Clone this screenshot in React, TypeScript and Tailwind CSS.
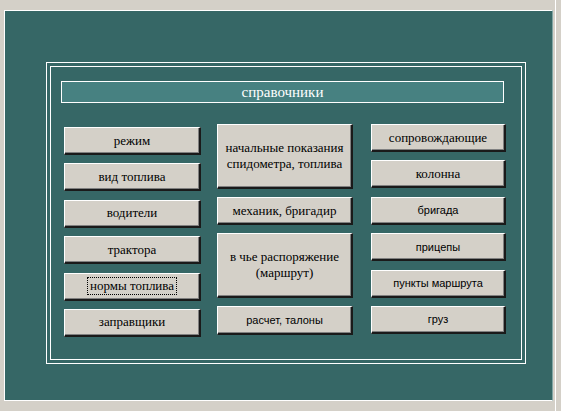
const serif = "font-['Liberation_Serif','Times_New_Roman',serif]";
const sansFont = "font-['Liberation_Sans',Arial,sans-serif]";

function Btn({
  children,
  h = 'h-[28px]',
  sans = false,
  focus = false,
}: {
  children: React.ReactNode;
  h?: string;
  sans?: boolean;
  focus?: boolean;
}) {
  return (
    <div
      className={`${h} flex items-center justify-center bg-[#d4d0c8] border-t border-l border-t-white border-l-white border-r-2 border-b-2 border-r-[#1a1a1a] border-b-[#1a1a1a] shadow-[inset_-1px_-1px_0_#808080] text-black text-center leading-[16px] ${
        sans ? `${sansFont} text-[11px]` : `${serif} text-[13px]`
      }`}
    >
      {focus ? (
        <span className="border border-dotted border-black px-[2px] leading-[16px]">{children}</span>
      ) : (
        <span>{children}</span>
      )}
    </div>
  );
}

export default function App() {
  return (
    <div className="w-[561px] h-[411px] bg-[#d4d0c8] pt-[10px] pl-[4px] overflow-hidden flex">
      <div className="w-[549px] h-[391px] bg-[#366766] border border-white border-r-[#7fa3a2] pt-[51px] pl-[41px]">
        <div className="w-[480px] h-[302px] border border-white p-[3px]">
          <div className="h-full border border-white pt-[14px] pl-[10px]">
            <div
              className={`w-[443px] h-[22px] bg-[#478181] border border-white flex items-center justify-center text-white text-[15px] ${serif}`}
            >
              справочники
            </div>
            <div className="flex mt-[21px] pl-[3px]">
              <div className="w-[137px] flex flex-col gap-[8.4px] mt-[3px]">
                <Btn>режим</Btn>
                <Btn>вид топлива</Btn>
                <Btn>водители</Btn>
                <Btn>трактора</Btn>
                <Btn focus>нормы топлива</Btn>
                <Btn>заправщики</Btn>
              </div>
              <div className="w-[136px] ml-[16px] flex flex-col gap-[8px]">
                <Btn h="h-[65px]">
                  начальные показания
                  <br />
                  спидометра, топлива
                </Btn>
                <Btn>механик, бригадир</Btn>
                <Btn h="h-[65px]">
                  в чье распоряжение
                  <br />
                  (маршрут)
                </Btn>
                <Btn h="h-[29px]" sans>
                  расчет, талоны
                </Btn>
              </div>
              <div className="w-[135px] ml-[18px] flex flex-col gap-[8.4px]">
                <Btn>сопровождающие</Btn>
                <Btn>колонна</Btn>
                <Btn sans>бригада</Btn>
                <Btn sans>прицепы</Btn>
                <Btn sans>пункты маршрута</Btn>
                <Btn sans>груз</Btn>
              </div>
            </div>
          </div>
        </div>
      </div>
      <div className="ml-[2px] mt-[-10px] w-[1px] h-[411px] bg-white" />
    </div>
  );
}
